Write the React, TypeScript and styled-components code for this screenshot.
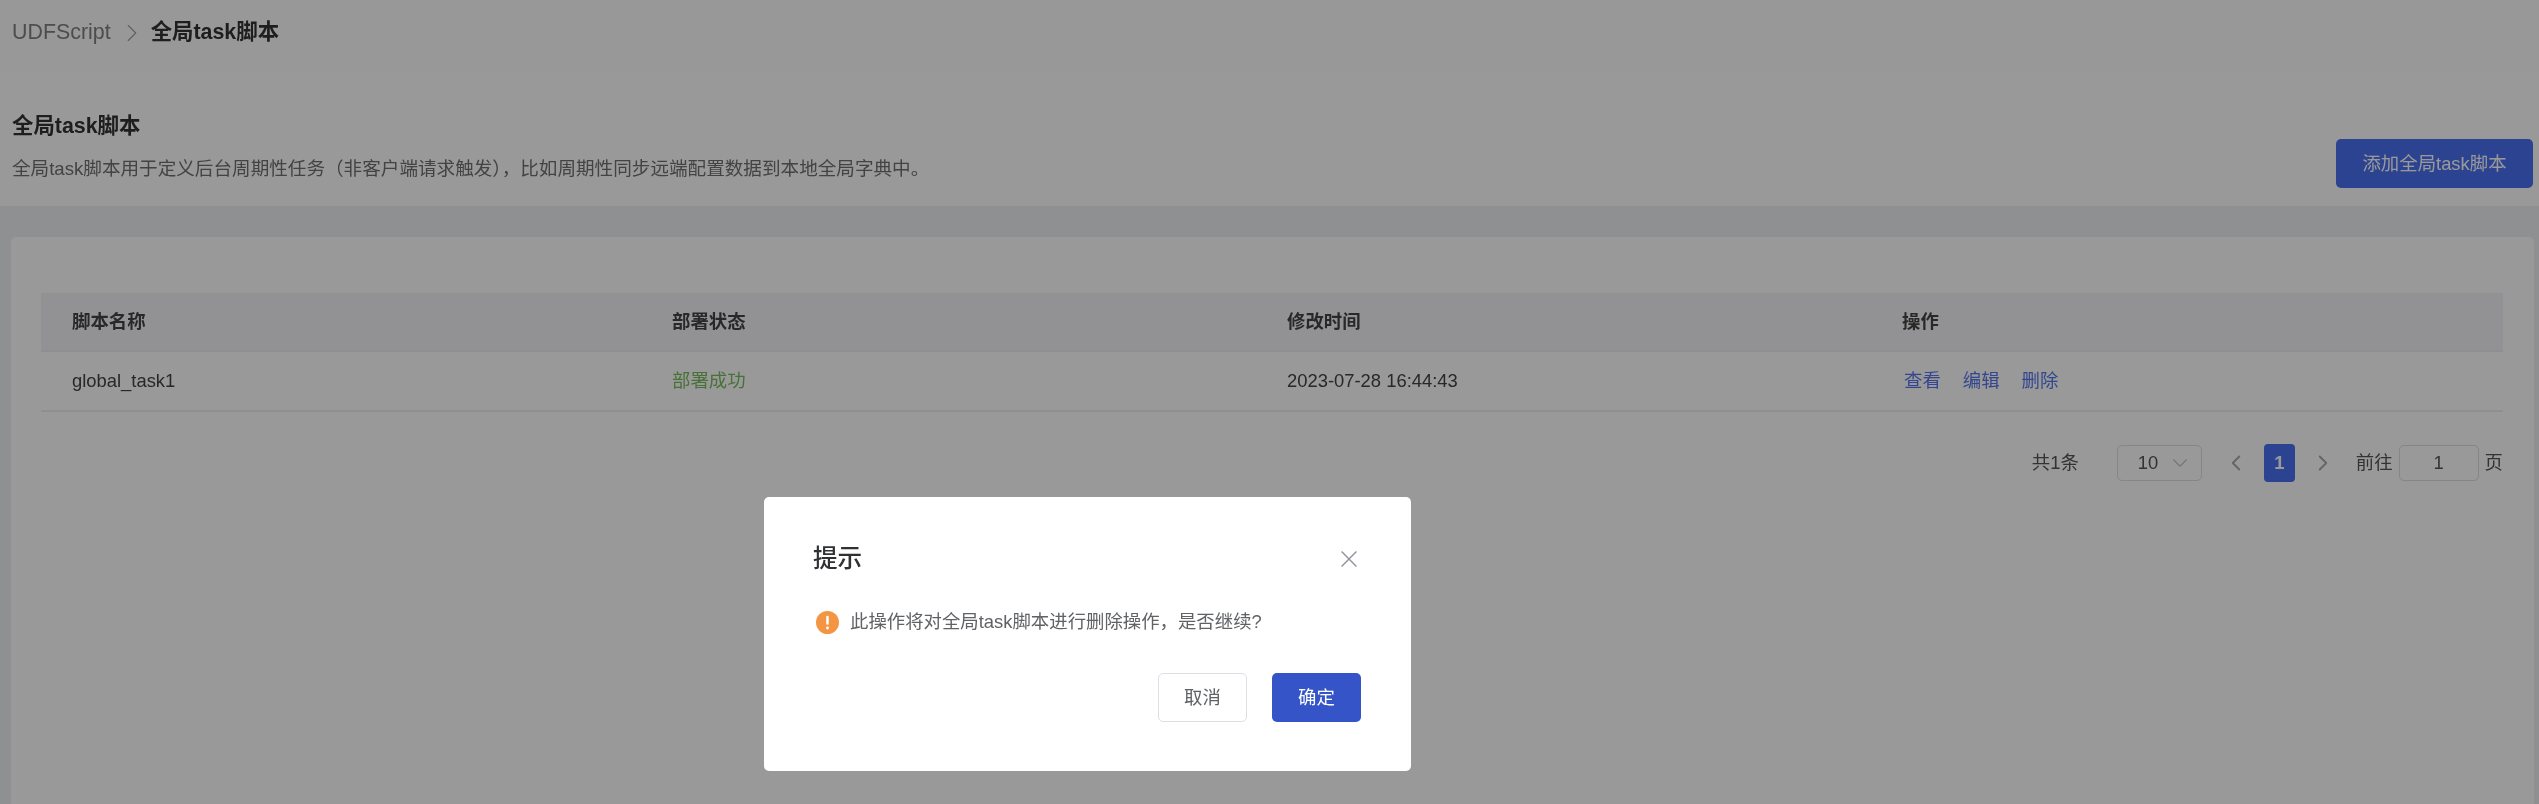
import React, { ReactElement } from "react";
import styled, { createGlobalStyle } from "styled-components";
import { ChevronDown, ChevronLeft, ChevronRight } from "lucide-react";

const scripts = [
  { name: "global_task1", status: "部署成功", time: "2023-07-28 16:44:43" },
];

const columns = ["脚本名称", "部署状态", "修改时间", "操作"];
const actions = ["查看", "编辑", "删除"];

function WarningIcon(): ReactElement {
  return (
    <svg width="23" height="23" viewBox="0 0 22 22">
      <circle cx="11" cy="11" r="11" fill="#f49544" />
      <rect x="9.8" y="4.6" width="2.4" height="8.6" rx="1" fill="#fff" />
      <circle cx="11" cy="16.2" r="1.4" fill="#fff" />
    </svg>
  );
}

function CloseIcon(): ReactElement {
  return (
    <svg width="16" height="16" viewBox="0 0 16 16">
      <path d="M0.6 0.6L15.4 15.4M15.4 0.6L0.6 15.4" stroke="#909399" strokeWidth="1.4" fill="none" />
    </svg>
  );
}

function App(): ReactElement {
  return (
    <AppBlock>
      <GlobalStyle />
      <BreadcrumbBar>
        <CrumbLink>UDFScript</CrumbLink>
        <CrumbArrow>
          <ChevronRight size={30} strokeWidth={0.9} />
        </CrumbArrow>
        <CrumbCurrent>全局task脚本</CrumbCurrent>
      </BreadcrumbBar>

      <IntroBar>
        <IntroText>
          <IntroTitle>全局task脚本</IntroTitle>
          <IntroDescription>
            全局task脚本用于定义后台周期性任务（非客户端请求触发），比如周期性同步远端配置数据到本地全局字典中。
          </IntroDescription>
        </IntroText>
        <PrimaryButton>添加全局task脚本</PrimaryButton>
      </IntroBar>

      <Content>
        <Card>
          <TableHead>
            {columns.map((column) => (
              <HeadCell key={column}>{column}</HeadCell>
            ))}
          </TableHead>
          {scripts.map((script) => (
            <TableRow key={script.name}>
              <BodyCell>{script.name}</BodyCell>
              <StatusCell>{script.status}</StatusCell>
              <BodyCell>{script.time}</BodyCell>
              <ActionCell>
                {actions.map((action) => (
                  <ActionLink key={action}>{action}</ActionLink>
                ))}
              </ActionCell>
            </TableRow>
          ))}

          <Pagination>
            <PageTotal>共1条</PageTotal>
            <PageSize>
              10
              <ChevronDown size={26} strokeWidth={1} color="#c0c4cc" />
            </PageSize>
            <PageArrow>
              <ChevronLeft size={26} strokeWidth={1.8} />
            </PageArrow>
            <PageCurrent>1</PageCurrent>
            <PageArrow>
              <ChevronRight size={26} strokeWidth={1.8} />
            </PageArrow>
            <PageJump>
              前往
              <PageInput>1</PageInput>页
            </PageJump>
          </Pagination>
        </Card>
      </Content>

      <Overlay>
        <Dialog>
          <DialogClose>
            <CloseIcon />
          </DialogClose>
          <DialogTitle>提示</DialogTitle>
          <DialogMessage>
            <WarningIcon />
            此操作将对全局task脚本进行删除操作，是否继续?
          </DialogMessage>
          <DialogFooter>
            <CancelButton>取消</CancelButton>
            <ConfirmButton>确定</ConfirmButton>
          </DialogFooter>
        </Dialog>
      </Overlay>
    </AppBlock>
  );
}

const GlobalStyle = createGlobalStyle`
  html, body {
    margin: 0;
    padding: 0;
    overflow: hidden;
  }
  * {
    box-sizing: border-box;
  }
  body {
    font-family: "Liberation Sans", "Noto Sans CJK SC", sans-serif;
    font-size: 18.4px;
    line-height: 1.3;
    color: #333;
  }
`;

const AppBlock = styled.div`
  position: relative;
  display: flex;
  flex-direction: column;
  height: 804px;
  background-color: #eef0f3;
  filter: blur(0.6px);
`;

const BreadcrumbBar = styled.div`
  display: flex;
  align-items: center;
  height: 73px;
  padding: 0 12px 7px;
  font-size: 21.4px;
  background-color: #fdfdfd;
  box-shadow: 0 1px 3px rgba(0, 0, 0, 0.04);
`;

const CrumbLink = styled.span`
  color: #808080;
`;

const CrumbArrow = styled.span`
  display: flex;
  margin: 0 4px 0 6px;
  color: #a0a0a0;
`;

const CrumbCurrent = styled.span`
  font-weight: 700;
  color: #333;
`;

const IntroBar = styled.div`
  display: flex;
  justify-content: space-between;
  align-items: flex-end;
  height: 133px;
  padding: 40px 6px 18px 12px;
  background-color: #fff;
`;

const IntroText = styled.div`
  display: flex;
  flex-direction: column;
  gap: 15px;
  margin-bottom: 5px;
`;

const IntroTitle = styled.h2`
  margin: 0;
  font-size: 21.4px;
  line-height: 28px;
  font-weight: 700;
  color: #333;
`;

const IntroDescription = styled.p`
  margin: 0;
  font-size: 18.6px;
  line-height: 28px;
  color: #707070;
`;

const PrimaryButton = styled.div`
  display: flex;
  align-items: center;
  justify-content: center;
  width: 197px;
  height: 49px;
  border-radius: 5px;
  color: #fff;
  background-color: #4970f2;
`;

const Content = styled.div`
  flex: 1;
  display: flex;
  padding: 31px 5px 0 11px;
`;

const Card = styled.div`
  flex: 1;
  padding: 56px 31px 0 30px;
  border-radius: 5px 5px 0 0;
  background-color: #fff;
`;

const TableHead = styled.div`
  display: grid;
  grid-template-columns: 600px 615px 615px 1fr;
  align-items: center;
  height: 59px;
  background-color: #f3f4f7;
  border-bottom: 2px solid #eceef2;
`;

const TableRow = styled.div`
  display: grid;
  grid-template-columns: 600px 615px 615px 1fr;
  align-items: center;
  height: 60px;
  border-bottom: 2px solid #eceef2;
`;

const HeadCell = styled.div`
  padding-left: 31px;
  font-weight: 700;
  color: #444;
`;

const BodyCell = styled.div`
  padding-left: 31px;
  color: #444;
`;

const StatusCell = styled(BodyCell)`
  color: #78bd5c;
`;

const ActionCell = styled.div`
  display: flex;
  gap: 22px;
  padding-left: 33px;
`;

const ActionLink = styled.span`
  color: #5576ee;
`;

const Pagination = styled.div`
  display: flex;
  justify-content: flex-end;
  align-items: center;
  margin-top: 32px;
  color: #555;
`;

const PageTotal = styled.span`
  margin-right: 38px;
`;

const PageSize = styled.div`
  display: flex;
  align-items: center;
  gap: 9px;
  width: 85px;
  height: 36px;
  margin-right: 20px;
  padding-left: 20px;
  border: 1px solid #dcdfe6;
  border-radius: 5px;
`;

const PageArrow = styled.span`
  display: flex;
  justify-content: center;
  width: 28px;
  color: #aaa;
`;

const PageCurrent = styled.div`
  display: flex;
  align-items: center;
  justify-content: center;
  width: 31px;
  height: 38px;
  margin: 0 14px;
  border-radius: 4px;
  font-weight: 700;
  color: #fff;
  background-color: #4970f2;
`;

const PageJump = styled.div`
  display: flex;
  align-items: center;
  gap: 6px;
  margin-left: 19px;
`;

const PageInput = styled.div`
  display: flex;
  align-items: center;
  justify-content: center;
  width: 80px;
  height: 36px;
  border: 1px solid #dcdfe6;
  border-radius: 5px;
`;

const Overlay = styled.div`
  position: absolute;
  inset: 0;
  display: flex;
  align-items: flex-start;
  padding: 497px 0 0 764px;
  background-color: rgba(0, 0, 0, 0.4);
`;

const Dialog = styled.div`
  position: relative;
  width: 647px;
  height: 274px;
  padding: 46px 50px 49px 49px;
  border-radius: 5px;
  background-color: #fff;
`;

const DialogClose = styled.span`
  position: absolute;
  top: 54px;
  right: 54px;
  display: flex;
`;

const DialogTitle = styled.div`
  font-size: 24.6px;
  line-height: 32px;
  font-weight: 500;
  color: #303133;
`;

const DialogMessage = styled.div`
  display: flex;
  align-items: center;
  gap: 11px;
  height: 24px;
  margin: 35px 0 39px 3px;
  color: #606266;
`;

const DialogFooter = styled.div`
  display: flex;
  justify-content: flex-end;
  gap: 25px;
`;

const CancelButton = styled.div`
  display: flex;
  align-items: center;
  justify-content: center;
  width: 89px;
  height: 49px;
  border: 1px solid #dcdfe6;
  border-radius: 5px;
  color: #606266;
`;

const ConfirmButton = styled(CancelButton)`
  border: none;
  color: #fff;
  background-color: #3554c8;
`;

export default App;
